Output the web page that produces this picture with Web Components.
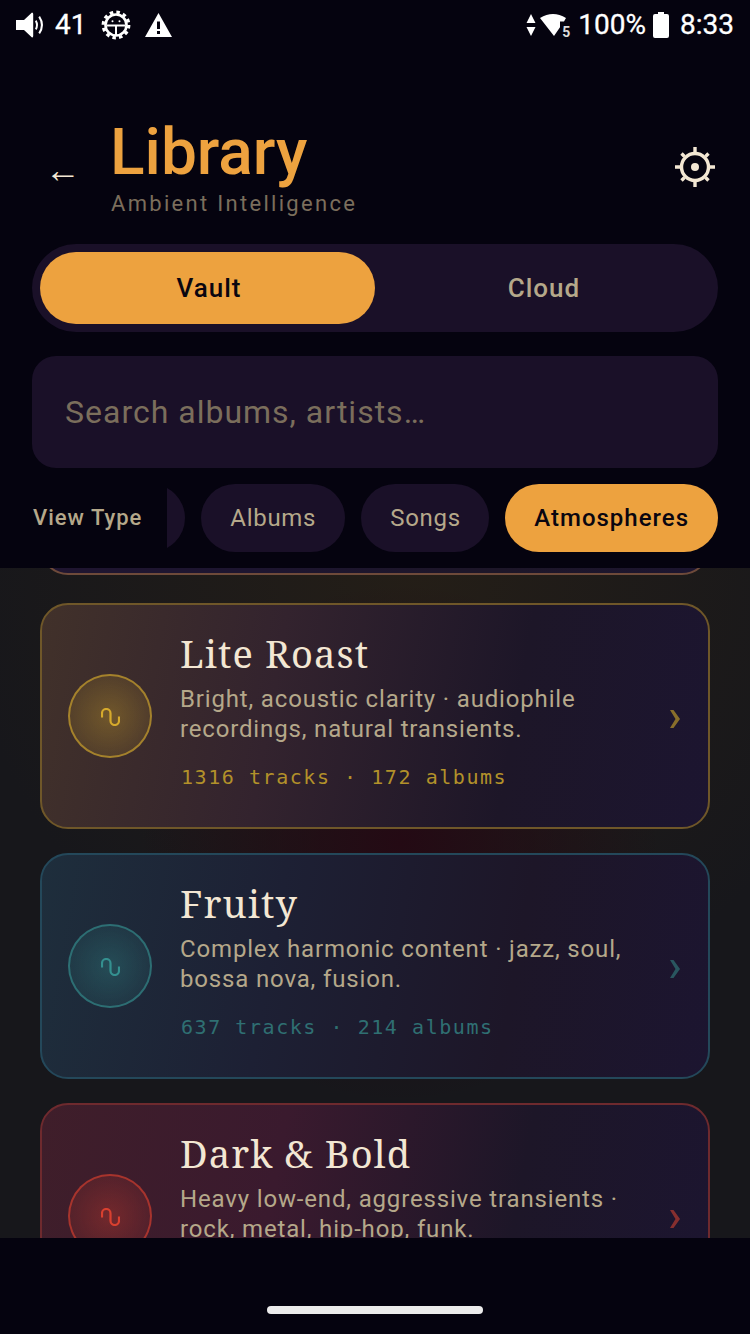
<!DOCTYPE html>
<html lang="en">
<head>
<meta charset="utf-8">
<title>Library</title>
<style>
  html, body { margin: 0; height: 100%; background: #05030f; }
  body { font-family: Roboto, "Liberation Sans", sans-serif; }
</style>
</head>
<body>
<library-screen>
  <status-bar slot="status"></status-bar>
  <library-header slot="header"></library-header>
  <segment-switch slot="header" active="Vault" other="Cloud"></segment-switch>
  <search-field slot="header" placeholder="Search albums, artists…"></search-field>
  <view-chips slot="header"></view-chips>

  <atmosphere-card tone="clay" stub></atmosphere-card>
  <atmosphere-card tone="gold" name="Lite Roast" meta="1316 tracks · 172 albums">Bright, acoustic clarity · audiophile recordings, natural transients.</atmosphere-card>
  <atmosphere-card tone="teal" name="Fruity" meta="637 tracks · 214 albums">Complex harmonic content · jazz, soul, bossa nova, fusion.</atmosphere-card>
  <atmosphere-card tone="red" name="Dark &amp; Bold" meta="412 tracks · 96 albums">Heavy low-end, aggressive transients · rock, metal, hip-hop, funk.</atmosphere-card>
</library-screen>

<script>
class LibraryScreen extends HTMLElement {
  constructor() {
    super();
    this.attachShadow({ mode: 'open' });
    this.shadowRoot.innerHTML = `
      <style>
        :host {
          display: flex;
          flex-direction: column;
          width: 750px;
          height: 1334px;
          overflow: hidden;
          background: #05030f;
        }
        .top {
          flex: none;
          height: 568px;
          display: flex;
          flex-direction: column;
        }
        .head {
          display: flex;
          flex-direction: column;
          padding: 0 32px;
        }
        .scroll {
          flex: none;
          height: 670px;
          overflow: hidden;
          background:
            radial-gradient(circle 260px at 400px 275px, #240a14 0%, rgba(36, 10, 20, 0) 100%),
            radial-gradient(circle 460px at 420px 0px, #241e17 0%, rgba(36, 30, 23, 0) 100%),
            #17171b;
        }
        .list {
          display: flex;
          flex-direction: column;
          gap: 24px;
          padding: 0 40px;
        }
        .nav {
          flex: none;
          height: 96px;
          display: flex;
          justify-content: center;
        }
        .pill {
          width: 216px;
          height: 8px;
          margin-top: 68px;
          border-radius: 4px;
          background: #ececec;
        }
      </style>
      <div class="top">
        <slot name="status"></slot>
        <div class="head"><slot name="header"></slot></div>
      </div>
      <div class="scroll"><div class="list"><slot></slot></div></div>
      <div class="nav"><div class="pill"></div></div>
    `;
  }
}

class StatusBar extends HTMLElement {
  constructor() {
    super();
    this.attachShadow({ mode: 'open' });
    this.shadowRoot.innerHTML = `
      <style>
        :host {
          display: flex;
          align-items: center;
          justify-content: space-between;
          height: 50px;
          padding: 0 16px;
          color: #fff;
          font: 400 28px/50px Roboto, sans-serif;
          -webkit-text-stroke: .3px #fff;
        }
        .side { display: flex; align-items: center; }
        svg { display: block; fill: #fff; }
        .wifi { position: relative; width: 30px; height: 26px; margin-left: 4px; }
        .wifi span {
          position: absolute;
          right: 0;
          bottom: -1px;
          font: 700 14px/14px Roboto, sans-serif;
          color: #dcdcdc;
          -webkit-text-stroke: 0;
        }
      </style>
      <div class="side">
        <svg width="30" height="26" viewBox="0 0 30 26">
          <path d="M0 8h8L16 0.5q1.200 0 1.200 1.500V24q0 1.500-1.200 1.500L8 18H0z"/>
          <path d="M20.500 8q3 5 0 10l-1.500-1.200q2-3.800 0-7.600zM24 4q6 9 0 18l-1.600-1.200q5-7.800 0-15.600z" />
        </svg>
        <span style="margin-left:9px">41</span>
        <svg style="margin-left:15px" width="30" height="30" viewBox="0 0 30 30">
          <circle cx="15" cy="15" r="12.800" fill="none" stroke="#fff" stroke-width="3.200" stroke-dasharray="3.500 3.200"/>
          <circle cx="15" cy="15" r="10.500" fill="none" stroke="#fff" stroke-width="2.600"/>
          <path d="M6 14.500h18v2H16V25h-2V16.500H6z"/>
          <circle cx="11.500" cy="11.200" r="1"/><circle cx="18.500" cy="11.200" r="1"/>
        </svg>
        <svg style="margin-left:14px" width="27" height="24" viewBox="0 0 27 24">
          <path fill-rule="evenodd" d="M13.500 0L27 24H0zM12 8.500v7.500h3V8.500zM12 18v3h3v-3z"/>
        </svg>
      </div>
      <div class="side">
        <svg width="10" height="22" viewBox="0 0 10 22"><path d="M5 0l4.500 9H.5zM5 22L.5 13h9z"/></svg>
        <div class="wifi">
          <svg width="30" height="26" viewBox="0 0 30 26"><path d="M0 6Q13-2 26 6L24 9.500H20V15.200L14 24z"/></svg>
          <span>5</span>
        </div>
        <span style="margin-left:8px">100%</span>
        <svg style="margin-left:7px" width="16" height="26" viewBox="0 0 16 26"><path d="M5 0h6v2h3q2 0 2 2v20q0 2-2 2H2q-2 0-2-2V4q0-2 2-2h3z"/></svg>
        <span style="margin-left:11px">8:33</span>
      </div>
    `;
  }
}

class LibraryHeader extends HTMLElement {
  constructor() {
    super();
    this.attachShadow({ mode: 'open' });
    this.shadowRoot.innerHTML = `
      <style>
        :host {
          display: flex;
          align-items: flex-start;
          height: 194px;
          padding-left: 13px;
        }
        .back {
          width: 66px;
          margin-top: 100px;
          font: 400 36px/40px "Liberation Serif", serif;
          color: #f3e7d3;
        }
        .titles { flex: 1; padding-top: 65px; }
        h1 {
          margin: 0 0 0 -1px;
          font: 500 64px/76px Roboto, sans-serif;
          color: #eda23f;
        }
        p {
          margin: 0;
          font: 400 22px/26px Roboto, sans-serif;
          letter-spacing: 2.300px;
          color: #7b6e5c;
        }
        svg { display: block; margin: 96px 2px 0 0; }
      </style>
      <div class="back">←</div>
      <div class="titles">
        <h1>Library</h1>
        <p>Ambient Intelligence</p>
      </div>
      <svg width="42" height="42" viewBox="0 0 42 42" fill="none" stroke="#f3e7d3" stroke-width="3.400">
        <circle cx="21" cy="21" r="13.500"/>
        <circle cx="21" cy="21" r="4" fill="#f3e7d3" stroke="none"/>
        <path d="M21 1v6M21 35v6M1 21h6M35 21h6M7.500 7.500l3 3M31.500 31.500l3 3M34.500 7.500l-3 3M10.500 31.500l-3 3"/>
      </svg>
    `;
  }
}

class SegmentSwitch extends HTMLElement {
  constructor() {
    super();
    this.attachShadow({ mode: 'open' });
    this.shadowRoot.innerHTML = `
      <style>
        :host {
          display: grid;
          grid-template-columns: 1fr 1fr;
          height: 72px;
          padding: 8px;
          border-radius: 44px;
          background: #1a1028;
          font: 500 26px/72px Roboto, sans-serif;
          letter-spacing: 1px;
          text-align: center;
          text-indent: 3px;
        }
        .on { border-radius: 36px; background: #eda23f; color: #0a0610; }
        .off { color: #b5a88a; }
      </style>
      <div class="on">${this.getAttribute('active')}</div>
      <div class="off">${this.getAttribute('other')}</div>
    `;
  }
}

class SearchField extends HTMLElement {
  constructor() {
    super();
    this.attachShadow({ mode: 'open' });
    this.shadowRoot.innerHTML = `
      <style>
        :host {
          display: block;
          height: 112px;
          margin-top: 24px;
          padding-left: 33px;
          border-radius: 24px;
          background: #1a1028;
          font: 400 32px/112px Roboto, sans-serif;
          letter-spacing: 1px;
          color: #7b6e5c;
        }
      </style>
      ${this.getAttribute('placeholder')}
    `;
  }
}

class ViewChips extends HTMLElement {
  constructor() {
    super();
    this.attachShadow({ mode: 'open' });
    this.shadowRoot.innerHTML = `
      <style>
        :host {
          display: flex;
          align-items: center;
          height: 68px;
          margin-top: 16px;
        }
        .label {
          flex: none;
          width: 135px;
          padding-left: 1px;
          box-sizing: border-box;
          font: 500 22px/68px Roboto, sans-serif;
          letter-spacing: 1px;
          color: #b5a88a;
        }
        .track {
          flex: 1;
          display: flex;
          gap: 16px;
          overflow: hidden;
          justify-content: flex-end;
        }
        .chip {
          flex: none;
          padding: 0 28.500px 0 29.500px;
          border-radius: 34px;
          background: #1a1028;
          font: 400 24px/68px Roboto, sans-serif;
          letter-spacing: .7px;
          color: #b5a88a;
        }
        .stub { width: 68px; height: 68px; padding: 0; }
        .on { padding: 0 29px; background: #eda23f; color: #0a0610; font-weight: 500; letter-spacing: 1px; }
      </style>
      <div class="label">View Type</div>
      <div class="track">
        <div class="chip stub"></div>
        <div class="chip">Albums</div>
        <div class="chip">Songs</div>
        <div class="chip on">Atmospheres</div>
      </div>
    `;
  }
}

const TONES = {
  clay: { line: '#6e4a3a', tint: '#201530', mid: '#1d1530', wave: '#c9683f', text: '#c9683f' },
  gold: { line: '#6f5729', tint: '#41312a', mid: '#33232e', wave: '#d6aa2c', text: '#b2912a' },
  teal: { line: '#24485a', tint: '#1e2e3c', mid: '#1d2034', wave: '#34908f', text: '#2f6f72' },
  red: { line: '#6e2a2e', tint: '#3f1e2a', mid: '#3a1a2e', wave: '#d9402f', text: '#b03a30' }
};

class AtmosphereCard extends HTMLElement {
  constructor() {
    super();
    this.attachShadow({ mode: 'open' });
  }

  connectedCallback() {
    const tone = TONES[this.getAttribute('tone')];
    const isStub = this.hasAttribute('stub');
    this.shadowRoot.innerHTML = `
      <style>
        :host {
          display: flex;
          align-items: center;
          box-sizing: border-box;
          flex: none;
          height: 226px;
          padding: 0 26px;
          border: 2px solid ${tone.line};
          ${isStub ? 'margin: -219px 0 4px;' : ''}
          border-radius: 28px;
          background: linear-gradient(100deg, ${tone.tint} 0%, ${tone.mid} 35%, #1d1628 70%, #1c1530 100%);
        }
        .orb {
          flex: none;
          box-sizing: border-box;
          width: 84px;
          height: 84px;
          display: grid;
          place-items: center;
          border: 2px solid ${tone.wave}a0;
          border-radius: 50%;
          background: radial-gradient(circle, ${tone.wave}58 0%, ${tone.wave}12 100%);
        }
        .orb svg { display: block; margin: 1px 0 0 1px; }
        .body { flex: 1; min-width: 0; margin-left: 28px; padding-bottom: 12px; }
        h2 {
          margin: 0;
          font: 400 38px/46px "Noto Serif", "DejaVu Serif", serif;
          letter-spacing: 1.100px;
          color: #f3e7d3;
        }
        p {
          margin: 8px 0 0;
          font: 400 24px/30px Roboto, sans-serif;
          letter-spacing: .84px;
          color: #b5a88a;
        }
        .meta {
          margin: 20px 0 0 1px;
          font: 400 20px/26px "DejaVu Sans Mono", monospace;
          letter-spacing: 1.550px;
          color: ${tone.text};
        }
        .go { flex: none; margin: 6px 1px 0 13px; opacity: .72; }
      </style>
      ${isStub ? '' : `
        <div class="orb">
          <svg width="19" height="18" viewBox="0 0 19 18" fill="none" stroke="${tone.wave}" stroke-width="2.200">
            <path d="M1 9.500V5.250A4.250 4.250 0 0 1 9.500 5.250V12.750A4.250 4.250 0 0 0 18 12.750V8.500"/>
          </svg>
        </div>
        <div class="body">
          <h2>${this.getAttribute('name').replace('&', '&amp;')}</h2>
          <p><slot></slot></p>
          <div class="meta">${this.getAttribute('meta')}</div>
        </div>
        <svg class="go" width="12" height="18" viewBox="0 0 12 18" fill="${tone.text}"><path d="M1 0h3.500L11 9l-6.500 9H1l5.500-9z"/></svg>
      `}
    `;
  }
}

customElements.define('library-screen', LibraryScreen);
customElements.define('status-bar', StatusBar);
customElements.define('library-header', LibraryHeader);
customElements.define('segment-switch', SegmentSwitch);
customElements.define('search-field', SearchField);
customElements.define('view-chips', ViewChips);
customElements.define('atmosphere-card', AtmosphereCard);
</script>
</body>
</html>
